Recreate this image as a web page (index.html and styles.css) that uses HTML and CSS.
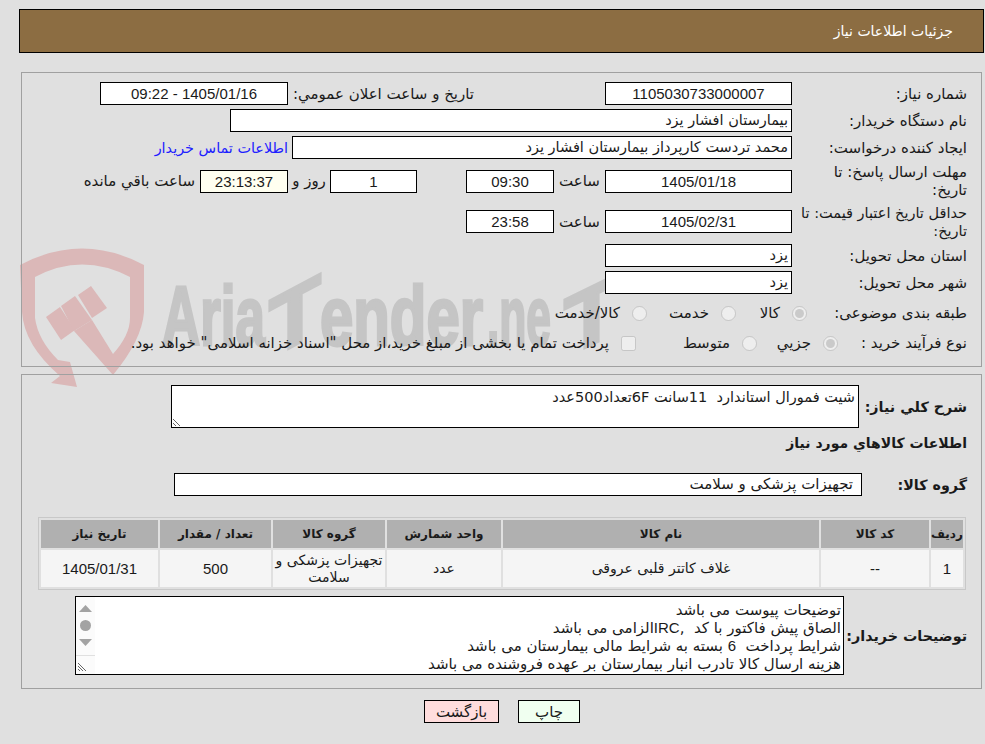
FILE: index.html
```html
<!DOCTYPE html>
<html lang="fa" dir="rtl">
<head>
<meta charset="utf-8">
<title>جزئیات اطلاعات نیاز</title>
<link rel="stylesheet" href="styles.css">
</head>
<body>
<svg class="watermark" viewBox="0 0 985 744" aria-hidden="true">
  <g class="wm-shield">
    <path d="M20 265 Q82 232 144 265 L144 312 Q142 340 113 375 L74 331 L92 320 L113 354 Q130 335 130 318 L130 277 Q82 252 35 277 L35 318 Q38 340 58 360 L70 362 L77 387 L51 383 L60 376 Q24 345 22 312 Z"/>
    <polygon points="46,317 60,307 75,330 61,340"/>
    <polygon points="61,306 75,296 92,320 74,331"/>
    <polygon points="78,295 91,286 107,308 92,318"/>
  </g>
  <g class="wm-text" direction="ltr">
    <text x="162" y="345" textLength="103" lengthAdjust="spacingAndGlyphs">Aria</text>
    <text x="269" y="345" textLength="52" lengthAdjust="spacingAndGlyphs" transform="skewY(-28) translate(0 157)">T</text>
    <text x="320" y="345" textLength="163" lengthAdjust="spacingAndGlyphs">ender</text>
    <text x="487" y="345" textLength="64" lengthAdjust="spacingAndGlyphs">.ne</text>
    <text x="564" y="345" textLength="55" lengthAdjust="spacingAndGlyphs" transform="skewY(-26) translate(0 288)">T</text>
  </g>
</svg>

<header class="title-bar">جزئیات اطلاعات نیاز</header>

<section class="panel panel-info">
  <div class="row row-std">
    <div class="label l-175">شماره نیاز:</div>
    <div class="field f-date center"><span class="num">1105030733000007</span></div>
    <div class="label label-public">تاريخ و ساعت اعلان عمومي:</div>
    <div class="field f-public center"><span class="num">1405/01/16 - 09:22</span></div>
  </div>
  <div class="row row-std">
    <div class="label l-175">نام دستگاه خریدار:</div>
    <div class="field f-buyer">بیمارستان افشار یزد</div>
  </div>
  <div class="row row-std">
    <div class="label l-175">ایجاد کننده درخواست:</div>
    <div class="field f-creator">محمد تردست کارپرداز بیمارستان افشار یزد</div>
    <a class="contact" href="#">اطلاعات تماس خریدار</a>
  </div>
  <div class="row row-deadline">
    <div class="label l-175 wrap">مهلت ارسال پاسخ: تا<br>تاریخ:</div>
    <div class="field f-date center"><span class="num">1405/01/18</span></div>
    <div class="time-label">ساعت</div>
    <div class="field f-time center"><span class="num">09:30</span></div>
    <div class="field f-days center"><span class="num">1</span></div>
    <div class="time-label days-label">روز و</div>
    <div class="field f-left center"><span class="num">23:13:37</span></div>
    <div class="left-label">ساعت باقي مانده</div>
  </div>
  <div class="row row-valid">
    <div class="label l-175 wrap wrap-long">حداقل تاریخ اعتبار قیمت: تا<br>تاریخ:</div>
    <div class="field f-date center"><span class="num">1405/02/31</span></div>
    <div class="time-label">ساعت</div>
    <div class="field f-time center"><span class="num">23:58</span></div>
  </div>
  <div class="row row-std">
    <div class="label l-175">استان محل تحویل:</div>
    <div class="field f-date">یزد</div>
  </div>
  <div class="row row-std">
    <div class="label l-175">شهر محل تحویل:</div>
    <div class="field f-date">یزد</div>
  </div>
  <div class="row row-choice">
    <div class="label l-160">طبقه بندی موضوعی:</div>
    <label class="opt o-71"><input type="radio" name="cat" checked disabled><span>کالا</span></label>
    <label class="opt o-89"><input type="radio" name="cat" disabled><span>خدمت</span></label>
    <label class="opt"><input type="radio" name="cat" disabled><span>کالا/خدمت</span></label>
  </div>
  <div class="row row-choice">
    <div class="label l-129">نوع فرآیند خرید :</div>
    <label class="opt o-81"><input type="radio" name="proc" checked disabled><span>جزيي</span></label>
    <label class="opt o-121"><input type="radio" name="proc" disabled><span>متوسط</span></label>
    <label class="opt"><input type="checkbox" disabled><span>پرداخت تمام یا بخشی از مبلغ خرید،از محل "اسناد خزانه اسلامی" خواهد بود.</span></label>
  </div>
</section>

<section class="panel panel-goods">
  <div class="row row-desc">
    <div class="label strong l-108">شرح کلي نياز:</div>
    <textarea class="desc" readonly>شیت فمورال استاندارد  11سانت 6Fتعداد500عدد</textarea>
  </div>
  <div class="label strong heading">اطلاعات کالاهاي مورد نياز</div>
  <div class="row row-group">
    <div class="label strong l-105">گروه کالا:</div>
    <div class="field f-group">تجهیزات پزشکی و سلامت</div>
  </div>
  <table class="items">
    <colgroup>
      <col class="c-idx"><col class="c-code"><col class="c-name"><col class="c-unit"><col class="c-group"><col class="c-qty"><col class="c-date">
    </colgroup>
    <thead>
      <tr><th>ردیف</th><th>کد کالا</th><th>نام کالا</th><th>واحد شمارش</th><th>گروه کالا</th><th>تعداد / مقدار</th><th>تاریخ نیاز</th></tr>
    </thead>
    <tbody>
      <tr><td><span class="num">1</span></td><td><span class="num">--</span></td><td>غلاف کاتتر قلبی عروقی</td><td>عدد</td><td>تجهیزات پزشکی و سلامت</td><td><span class="num">500</span></td><td><span class="num">1405/01/31</span></td></tr>
    </tbody>
  </table>
  <div class="row row-notes">
    <div class="label strong l-123">توضیحات خریدار:</div>
    <div class="notes">
      <div class="note-line">توضیحات پیوست می باشد</div>
      <div class="note-line">الصاق پیش فاکتور با کد  ,<span class="num">IRC</span>الزامی می باشد</div>
      <div class="note-line">شرایط پرداخت  <span class="num">6</span> بسته به شرایط مالی بیمارستان می باشد</div>
      <div class="note-line">هزینه ارسال کالا تادرب انبار بیمارستان بر عهده فروشنده می باشد</div>
      <div class="scroll">
        <svg viewBox="0 0 19 77" width="19" height="77" aria-hidden="true">
          <polygon points="3,15 9.500,8 16,15" class="sb"/>
          <circle cx="9.500" cy="28.500" r="5.500" class="sb"/>
          <polygon points="3,42 16,42 9.500,49" class="sb"/>
          <line x1="0" y1="58.500" x2="19" y2="58.500" class="sb-line"/>
          <path d="M2 66 L10 74 M2 69 L7 74 M2 72 L4 74" class="sb-grip"/>
        </svg>
      </div>
    </div>
  </div>
</section>

<div class="actions">
  <button class="btn btn-print" type="button">چاپ</button>
  <button class="btn btn-back" type="button">بازگشت</button>
</div>
</body>
</html>
```
FILE: styles.css
```css
* { box-sizing: border-box; }
html { background: #e0e0e0; }
body {
  margin: 0;
  padding-top: 9px;
  height: 744px;
  overflow: hidden;
  direction: rtl;
  color: #1a1a1a;
  font-family: "DejaVu Sans", sans-serif;
  font-size: 15px;
  line-height: 18px;
}
.num { font-family: "Liberation Sans", "DejaVu Sans", sans-serif; font-size: 15px; }

.watermark { position: absolute; left: 0; top: 0; width: 985px; height: 744px; z-index: -1; }
.wm-shield { fill: #dbb8b8; }
.wm-text {
  fill: #c5c5c5;
  stroke: #c5c5c5;
  stroke-width: 3px;
  font-family: "Liberation Sans", sans-serif;
  font-weight: 700;
  font-size: 84px;
}

.title-bar {
  width: 965px;
  height: 44px;
  margin-right: 1px;
  padding-right: 30px;
  background: #8c6d42;
  border: 1px solid #000;
  color: #fff;
  font-size: 14px;
  display: flex;
  align-items: center;
}

.panel {
  width: 961px;
  margin-right: 3px;
  border: 1px solid #a0a0a0;
  padding-right: 14px;
}
.panel-info { margin-top: 19px; height: 295px; padding-top: 9px; }
.panel-goods { margin-top: 7px; height: 315px; padding-top: 10px; }

.row { display: flex; align-items: center; }
.row-std { height: 23px; margin-bottom: 4px; }
.row-deadline { height: 40px; margin-top: -2px; margin-bottom: 1px; }
.row-valid { height: 39px; margin-bottom: 3px; }
.row-choice { height: 30px; }

.label { flex: none; }
.strong { font-weight: 700; font-size: 14.300px; }
.wrap { white-space: nowrap; }
.wrap-long { font-size: 14.500px; }
.l-175 { width: 175px; }
.l-160 { width: 160px; }
.l-129 { width: 129px; }
.l-108 { width: 108px; }
.l-105 { width: 105px; }
.l-123 { width: 123px; }
.label-public { width: 186px; margin-right: 131px; white-space: nowrap; }

.field {
  flex: none;
  height: 23px;
  border: 1px solid #000;
  background: #fff;
  padding: 0 3px;
  font-size: 14.500px;
  line-height: 21px;
  white-space: nowrap;
  overflow: hidden;
}
.center { text-align: center; }
.f-date { width: 187px; }
.f-public { width: 188px; }
.f-buyer { width: 562px; }
.f-creator { width: 500px; }
.f-time { width: 88px; }
.f-days { width: 87px; margin-right: 49px; }
.f-left { width: 88px; background: #fffff0; }
.contact { margin-right: 4px; color: #2020ff; font-size: 14.400px; text-decoration: none; }
.time-label { flex: none; width: 51px; text-align: center; }
.days-label { width: 42px; }
.left-label { margin-right: 5px; white-space: nowrap; }

.opt { display: flex; align-items: center; gap: 12px; flex: none; }
.opt input { width: 15px; height: 15px; margin: 0; flex: none; }
.o-71 { width: 71px; }
.o-89 { width: 89px; }
.o-81 { width: 81px; }
.o-121 { width: 121px; }

.row-desc { height: 43px; }
.desc {
  width: 688px;
  height: 43px;
  border: 1px solid #000;
  background: #fff;
  padding: 2px 3px;
  margin: 0;
  font: inherit;
  font-size: 14.500px;
  color: inherit;
  resize: vertical;
  overflow: hidden;
  outline: none;
  flex: none;
}
.heading { height: 20px; margin-top: 5px; line-height: 20px; font-size: 14px; }
.row-group { margin-top: 20px; height: 23px; }
.f-group { width: 688px; padding-right: 8px; font-size: 15px; }

.items {
  margin-top: 21px;
  margin-right: 1px;
  width: 928px;
  table-layout: fixed;
  border-collapse: separate;
  border-spacing: 2px;
  border: 1px solid #c8c8c8;
}
.items th, .items td { padding: 0; text-align: center; }
.items th { height: 28px; background: #b0b0b0; font-size: 12px; font-weight: 700; }
.items td { height: 37px; background: #f5f5f5; font-size: 14px; line-height: 17px; }
.c-idx { width: 32px; }
.c-code { width: 108px; }
.c-name { width: 316px; }
.c-unit { width: 114px; }
.c-group { width: 112px; }
.c-qty { width: 111px; }
.c-date { width: 117px; }

.row-notes { margin-top: 6px; height: 79px; }
.notes {
  position: relative;
  flex: none;
  width: 769px;
  height: 79px;
  border: 1px solid #000;
  background: #fff;
  padding: 4px 2px 0 0;
  overflow: hidden;
}
.note-line { white-space: pre; }
.scroll { position: absolute; left: 0; top: 0; width: 19px; height: 77px; background: #fbfbfb; }
.scroll svg { display: block; }
.sb { fill: #a3a3a3; }
.sb-line { stroke: #e0e0e0; stroke-width: 1; }
.sb-grip { stroke: #666; stroke-width: 1; fill: none; }

.actions { display: flex; gap: 19px; margin-top: 11px; padding-right: 405px; }
.btn {
  height: 23px;
  border: 1px solid #000;
  font: inherit;
  color: inherit;
  padding: 0;
}
.btn-print { width: 62px; background: #f0fff0; }
.btn-back { width: 75px; background: #ffdddd; }
```
